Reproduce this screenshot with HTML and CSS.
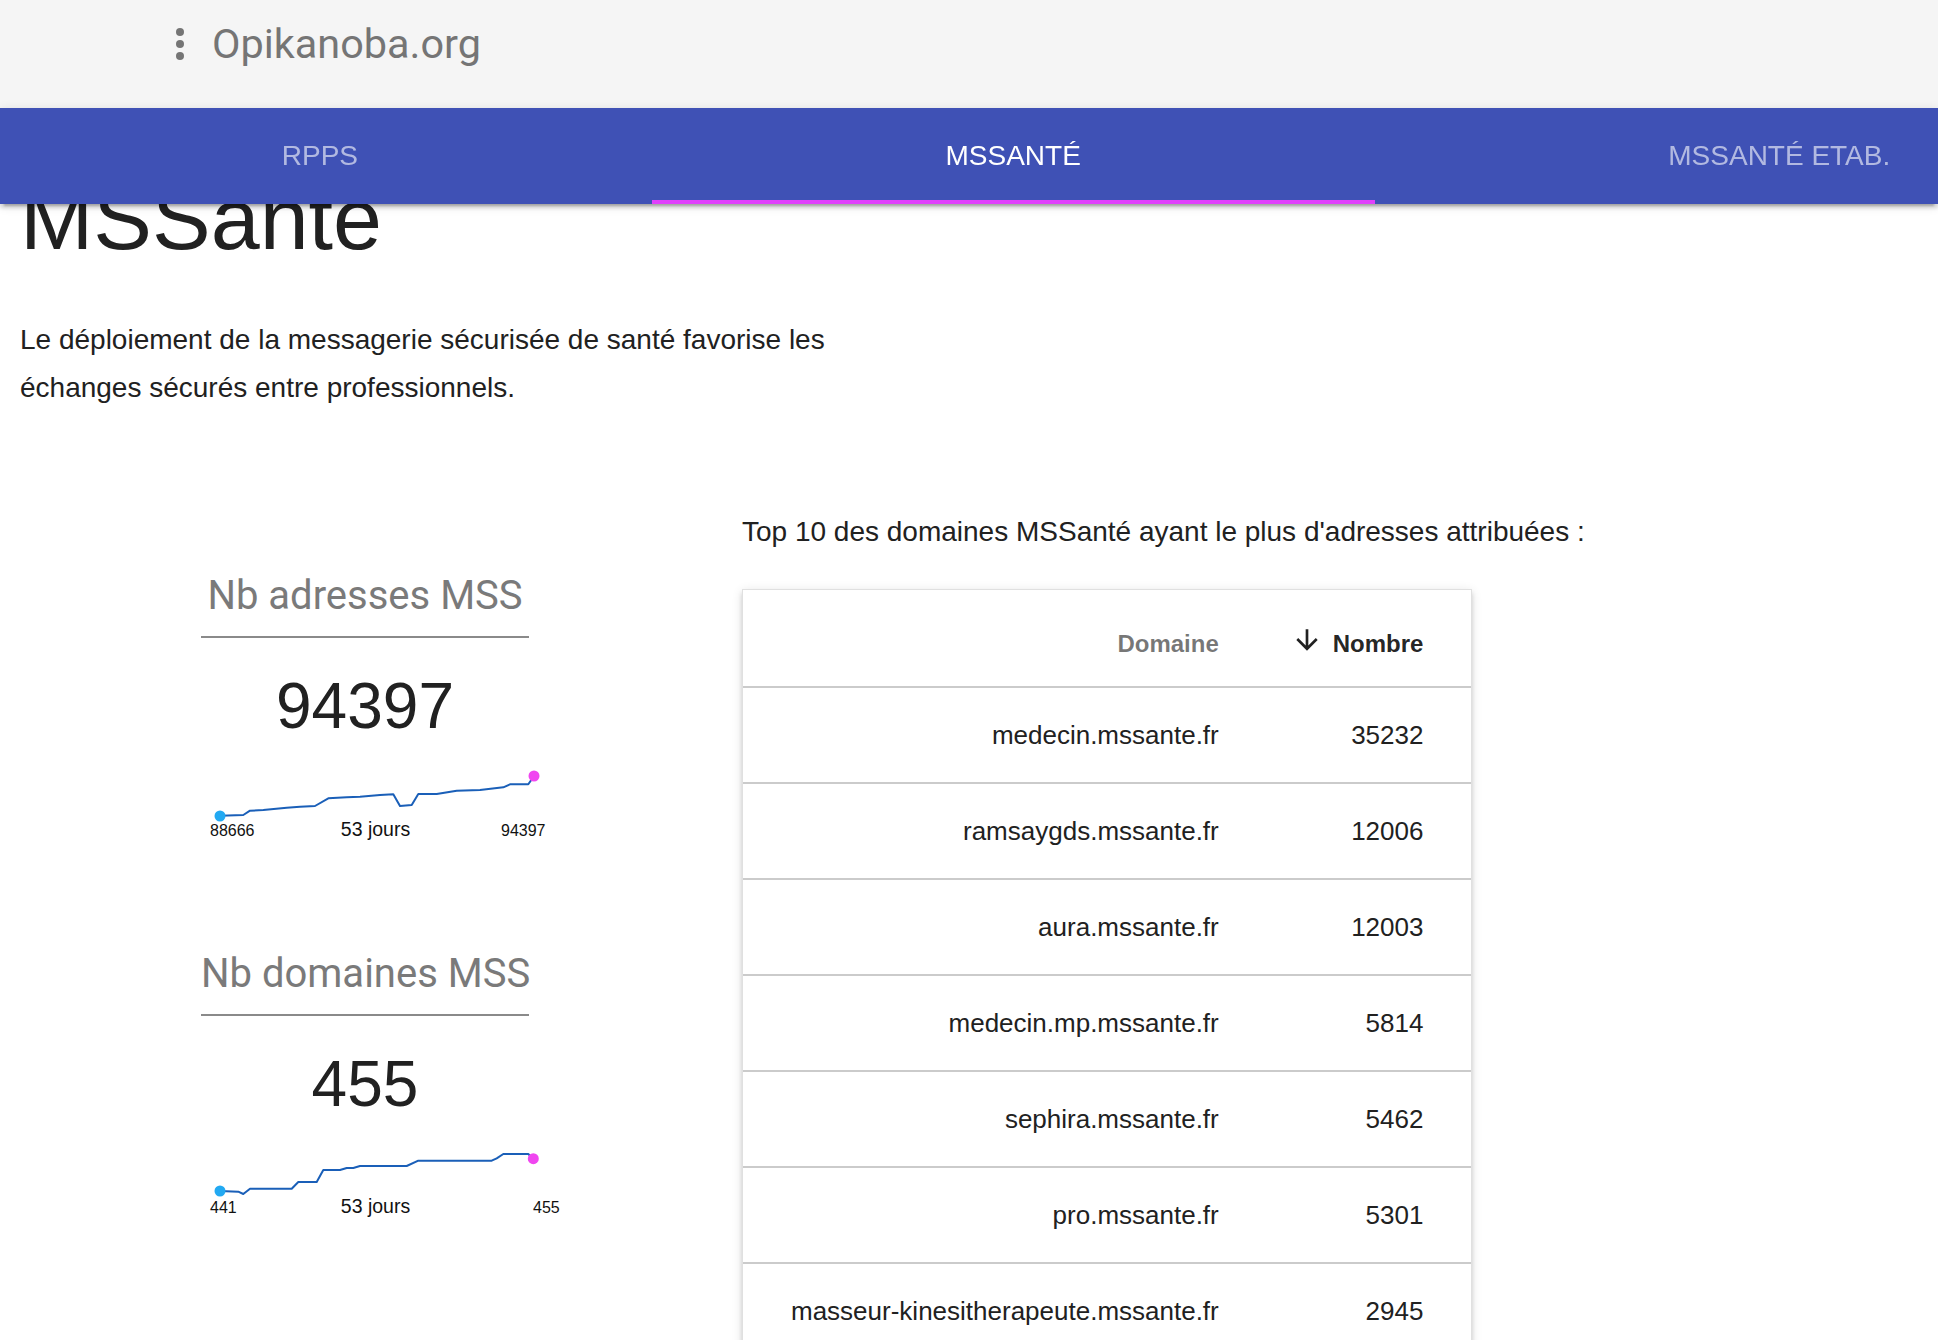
FILE: index.html
```html
<!DOCTYPE html>
<html lang="fr">
<head>
<meta charset="utf-8">
<title>MSSanté - Opikanoba.org</title>
<link rel="stylesheet" href="styles.css">
</head>
<body>
<div class="appbar">
  <header class="header">
    <svg class="menu-icon" viewBox="0 0 48 48" width="48" height="48" aria-hidden="true">
      <circle cx="24" cy="12" r="4"/>
      <circle cx="24" cy="24" r="4"/>
      <circle cx="24" cy="36" r="4"/>
    </svg>
    <span class="site-title">Opikanoba.org</span>
  </header>
  <nav class="tabbar">
    <div class="tabs">
      <a class="tab">RPPS</a>
      <a class="tab is-active">MSSANTÉ</a>
      <a class="tab">MSSANTÉ ETAB.</a>
    </div>
  </nav>
</div>

<main class="content">
  <h1 class="page-title">MSSanté</h1>
  <p class="intro">Le déploiement de la messagerie sécurisée de santé favorise les échanges sécurés entre professionnels.</p>

  <div class="stats-grid">
    <section class="stats">
      <div class="stat-card">
        <h2 class="stat-title">Nb adresses MSS</h2>
        <div class="stat-value">94397</div>
        <svg class="sparkline" viewBox="0 0 360 90" width="360" height="90">
          <polyline class="spark-line" points="35,55.7 58.3,55 65,50.7 78.3,50 101.7,47.7 115,46.7 130,46 143.3,38.3 161.7,37.3 175,36.7 195,35 208.3,34.3 215,46 226.7,45 233.3,34 251.7,34 271.7,30.7 295,30 318.3,27.3 325,24.3 343.3,24.3 349,16"/>
          <circle class="spark-start" cx="35" cy="56" r="5.5"/>
          <circle class="spark-end" cx="349" cy="16" r="5.5"/>
          <text class="spark-num" x="25" y="76">88666</text>
          <text class="spark-days" x="190.5" y="76">53 jours</text>
          <text class="spark-num" x="316" y="76">94397</text>
        </svg>
      </div>
      <div class="stat-card">
        <h2 class="stat-title">Nb domaines MSS</h2>
        <div class="stat-value">455</div>
        <svg class="sparkline" viewBox="0 0 360 90" width="360" height="90">
          <polyline class="spark-line" points="35,53 53.3,53.7 58.3,56 65,50.7 106.7,50.7 113.3,44 131.7,44 138.3,32 155,32 161.7,30 168.3,30 175,28 221.7,28 233.3,22.7 306.7,22.7 311.7,20.3 318.3,16 343.3,16 348.3,20.7"/>
          <circle class="spark-start" cx="35" cy="53" r="5.5"/>
          <circle class="spark-end" cx="348.3" cy="20.7" r="5.5"/>
          <text class="spark-num" x="25" y="75">441</text>
          <text class="spark-days" x="190.5" y="75">53 jours</text>
          <text class="spark-num" x="348" y="75">455</text>
        </svg>
      </div>
    </section>

    <section class="top-domains">
      <p class="table-caption">Top 10 des domaines MSSanté ayant le plus d'adresses attribuées :</p>
      <table class="data-table">
        <thead>
          <tr>
            <th>Domaine</th>
            <th class="is-sorted"><svg class="sort-icon" viewBox="0 0 24 24" width="32" height="32" aria-hidden="true"><path d="M20 12l-1.41-1.41L13 16.17V4h-2v12.17l-5.58-5.59L4 12l8 8 8-8z"/></svg>Nombre</th>
          </tr>
        </thead>
        <tbody>
          <tr><td>medecin.mssante.fr</td><td>35232</td></tr>
          <tr><td>ramsaygds.mssante.fr</td><td>12006</td></tr>
          <tr><td>aura.mssante.fr</td><td>12003</td></tr>
          <tr><td>medecin.mp.mssante.fr</td><td>5814</td></tr>
          <tr><td>sephira.mssante.fr</td><td>5462</td></tr>
          <tr><td>pro.mssante.fr</td><td>5301</td></tr>
          <tr><td>masseur-kinesitherapeute.mssante.fr</td><td>2945</td></tr>
        </tbody>
      </table>
    </section>
  </div>
</main>
</body>
</html>
```

FILE: styles.css
```css
html, body {
  margin: 0;
  padding: 0;
  background: #ffffff;
}

body {
  font-family: "Liberation Sans", Arial, Helvetica, sans-serif;
  color: #212121;
}

/* ---------- App bar (fixed, over the content) ---------- */
.appbar {
  position: fixed;
  top: 0;
  left: 0;
  right: 0;
  z-index: 10;
}

.header {
  box-sizing: border-box;
  height: 108px;
  padding: 20px 0 40px 156px;
  background: #f5f5f5;
  display: flex;
  align-items: center;
  gap: 8px;
}

.menu-icon {
  display: block;
  flex: none;
  fill: #757575;
}

.site-title {
  font-family: Roboto, "Liberation Sans", sans-serif;
  font-size: 41.4px;
  line-height: 48px;
  font-weight: 400;
  color: #757575;
}

.tabbar {
  height: 96px;
  background: #3f51b5;
  overflow: hidden;
  box-shadow: 0 4px 4px 0 rgba(0, 0, 0, 0.14),
              0 6px 2px -4px rgba(0, 0, 0, 0.2),
              0 2px 10px 0 rgba(0, 0, 0, 0.12);
}

.tabs {
  display: flex;
  width: 2196px;
  height: 96px;
  margin-left: -12px;
}

.tab {
  flex: 1 1 auto;
  display: flex;
  align-items: center;
  justify-content: center;
  font-size: 28px;
  line-height: 32px;
  font-weight: 500;
  color: rgba(255, 255, 255, 0.6);
  white-space: nowrap;
  text-decoration: none;
}

.tab.is-active {
  color: #ffffff;
  box-shadow: inset 0 -4px 0 #e040fb;
}

/* ---------- Content ---------- */
.content {
  padding: 171px 20px 0;
}

.page-title {
  margin: 0;
  font-size: 88px;
  line-height: 96px;
  font-weight: 400;
  color: #212121;
}

.intro {
  margin: 49px 0 0;
  max-width: 860px;
  font-size: 28px;
  line-height: 48px;
}

.stats-grid {
  display: grid;
  grid-template-columns: 690px 1fr;
  column-gap: 32px;
  align-items: start;
  margin-top: 96px;
}

/* ---------- Stat cards ---------- */
.stats {
  padding-top: 64px;
  display: flex;
  flex-direction: column;
  align-items: center;
  gap: 100px;
}

.stat-card {
  width: 328px;
  display: flex;
  flex-direction: column;
  align-items: center;
}

.stat-title {
  box-sizing: border-box;
  width: 100%;
  margin: 0;
  padding-bottom: 16px;
  border-bottom: 2px solid #8a8a8a;
  font-family: Roboto, "Liberation Sans", sans-serif;
  font-size: 40px;
  line-height: 48px;
  font-weight: 400;
  color: #7a7a7a;
  text-align: center;
  white-space: nowrap;
}

.stat-value {
  margin-top: 32px;
  font-size: 64px;
  line-height: 72px;
  color: #212121;
}

.sparkline {
  display: block;
  width: 360px;
  height: 90px;
  margin: 18px -16px 0;
  overflow: visible;
}

.spark-line {
  fill: none;
  stroke: #1a5fb8;
  stroke-width: 2;
  stroke-linejoin: round;
  stroke-linecap: round;
}

.spark-start {
  fill: #22a9f2;
}

.spark-end {
  fill: #f046f0;
}

.spark-num {
  font-family: "Liberation Sans", Arial, sans-serif;
  font-size: 16px;
  fill: #111111;
}

.spark-days {
  font-family: "Liberation Sans", Arial, sans-serif;
  font-size: 19.5px;
  fill: #111111;
  text-anchor: middle;
}

/* ---------- Table ---------- */
.table-caption {
  margin: 0 0 33px;
  font-size: 28px;
  line-height: 48px;
}

.data-table {
  border-collapse: separate;
  border-spacing: 0;
  border: 1px solid rgba(0, 0, 0, 0.12);
  background: #ffffff;
  box-shadow: 0 4px 4px 0 rgba(0, 0, 0, 0.14),
              0 6px 2px -4px rgba(0, 0, 0, 0.2),
              0 2px 10px 0 rgba(0, 0, 0, 0.12);
}

.data-table tr {
  height: 96px;
}

.data-table th {
  padding: 0 36px 18px;
  vertical-align: bottom;
  text-align: right;
  font-size: 24px;
  line-height: 48px;
  font-weight: 700;
  color: rgba(0, 0, 0, 0.54);
  white-space: nowrap;
}

.data-table th.is-sorted {
  color: rgba(0, 0, 0, 0.87);
}

.sort-icon {
  display: inline-block;
  width: 32px;
  height: 32px;
  margin-right: 10px;
  vertical-align: -4px;
  fill: rgba(0, 0, 0, 0.87);
}

.data-table td {
  padding: 0 36px;
  border-top: 2px solid #cbcbcb;
  vertical-align: middle;
  text-align: right;
  font-size: 26px;
  line-height: 32px;
  color: #212121;
  white-space: nowrap;
}

.data-table th:first-child,
.data-table td:first-child {
  padding-left: 48px;
}

.data-table th:last-child,
.data-table td:last-child {
  padding-right: 48px;
}
```
